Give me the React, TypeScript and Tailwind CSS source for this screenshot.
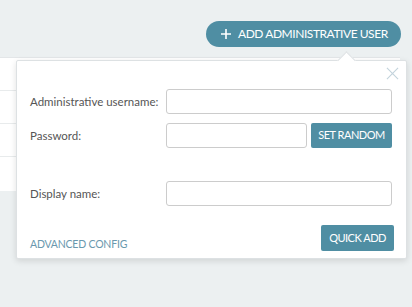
import React from 'react';

const font = { fontFamily: 'Lato, "Open Sans", sans-serif' };

const Field: React.FC<{ label: string; children: React.ReactNode; className?: string }> = ({ label, children, className }) => (
  <div className={`flex items-center ${className ?? ''}`}>
    <label className="w-[136px] shrink-0 text-[11.5px] text-[#555]">{label}</label>
    {children}
  </div>
);

const AddUserPopover: React.FC = () => (
  <div className="absolute left-[16px] top-[60px] w-[391px] h-[199px] bg-white border border-[#dde1e3] rounded-[2px] shadow-[0_2px_6px_rgba(0,0,0,0.12)]">
    {/* arrow */}
    <div className="absolute left-[323px] top-[-7px] w-[13px] h-[13px] rotate-45 bg-white border-l border-t border-[#dde1e3]" />
    <button className="absolute right-[7px] top-[6px] w-[13px] h-[13px] text-[#c3d3dc]">
      <svg viewBox="0 0 14 14" className="w-full h-full" fill="none" stroke="currentColor" strokeWidth="1.2">
        <path d="M1 1 L13 13 M13 1 L1 13" />
      </svg>
    </button>
    <div className="flex flex-col h-full pt-[28px] pl-[13px] pr-[14px] pb-[7px]">
      <Field label="Administrative username:">
        <input className="h-[25px] flex-1 border border-[#cccccc] rounded-[3px] outline-none" />
      </Field>
      <Field label="Password:" className="mt-[9px]">
        <input className="h-[25px] w-[141px] border border-[#cccccc] rounded-[3px] outline-none" />
        <button className="ml-[4px] h-[25px] flex-1 rounded-[2px] bg-[#4f8ea3] text-white text-[11px] whitespace-nowrap tracking-[-0.5px]">
          SET RANDOM
        </button>
      </Field>
      <Field label="Display name:" className="mt-[33px]">
        <input className="h-[25px] flex-1 border border-[#cccccc] rounded-[3px] outline-none" />
      </Field>
      <div className="mt-auto flex items-end justify-between">
        <a className="text-[10.5px] text-[#6a98ae] tracking-[-0.2px] mb-[-2px]">ADVANCED CONFIG</a>
        <button className="h-[26px] w-[73px] mr-[-2px] rounded-[2px] bg-[#4f8ea3] text-white text-[11px] whitespace-nowrap tracking-[-0.5px]">
          QUICK ADD
        </button>
      </div>
    </div>
  </div>
);

export default function App() {
  return (
    <div className="relative w-[412px] h-[307px] overflow-hidden bg-[#ecf0f1]" style={font}>
      <div className="flex justify-end pt-[21px] pr-[11px]">
        <button className="flex items-center gap-[7px] h-[26px] w-[195px] pl-[15px] rounded-full bg-[#4f8ea3] text-white text-[12px] whitespace-nowrap tracking-[-0.45px]">
          <svg viewBox="0 0 10 10" className="w-[10px] h-[10px]" stroke="currentColor" strokeWidth="1.6">
            <path d="M5 0 V10 M0 5 H10" />
          </svg>
          ADD ADMINISTRATIVE USER
        </button>
      </div>
      <div className="mt-[10px] w-[400px] h-[134px] bg-white border-t border-[#e3e6e8] flex flex-col">
        <div className="h-[33px] border-b border-[#e8ebec]" />
        <div className="h-[33px] border-b border-[#e8ebec]" />
        <div className="h-[33px] border-b border-[#e8ebec]" />
      </div>
      <AddUserPopover />
    </div>
  );
}
